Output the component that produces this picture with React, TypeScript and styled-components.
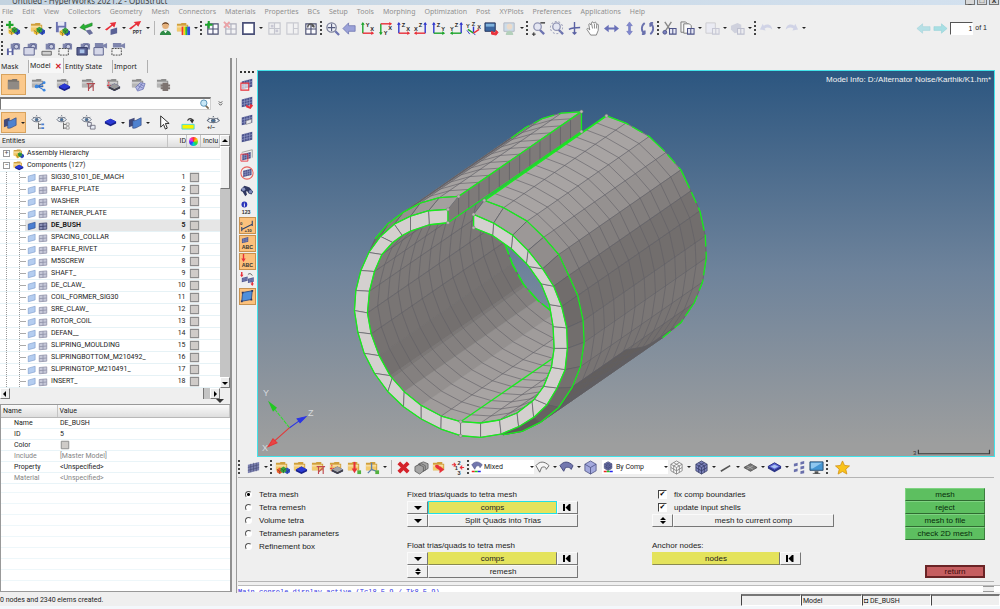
import React from "react";
import styled, { createGlobalStyle, css } from "styled-components";

const narrow = 'Roboto, "Liberation Sans", sans-serif';
const wide = '"Liberation Sans", Arial, sans-serif';

const GlobalStyle = createGlobalStyle`
  *, *::before, *::after { box-sizing: border-box; }
  body { margin: 0; background: #efefef; color: #1c1c1c; font-family: ${narrow}; font-size: 7px; line-height: 12px; }
  button, input, select { font: inherit; color: inherit; margin: 0; padding: 0; border-radius: 0; }
  button { cursor: pointer; }
  table { border-collapse: collapse; border-spacing: 0; table-layout: fixed; width: 100%; }
  th, td { padding: 0; text-align: left; font-weight: normal; }
  svg { display: block; flex: none; }
`;

/* ---------- Icon drawings, all on a 16 x 16 grid ---------- */

const Folder = ({ c = "#f3ca6c", d = "#cf9f3c" }: { c?: string; d?: string }) => (
  <g>
    <path d="M1 3h4l1-1h5v2h2v7H1z" fill={d} />
    <path d="M1 5h11v6H1z" fill={c} />
    <path d="M1 5h11v2H1z" fill="#fff" opacity=".35" />
  </g>
);
const Block = ({ x, y, c }: { x: number; y: number; c: string }) => (
  <g transform={`translate(${x} ${y})`}>
    <path d="M0 2l3-2 3 2v3L3 7 0 5z" fill={c} />
    <path d="M0 2l3 2 3-2M3 4v3" stroke="#223" strokeWidth=".4" fill="none" />
  </g>
);
const Slab = ({ x = 3, y = 7, c = "#2b3ad4" }: { x?: number; y?: number; c?: string }) => (
  <g transform={`translate(${x} ${y})`}>
    <path d="M0 3l6-3 6 3v2L6 8 0 5z" fill="#17208a" />
    <path d="M0 3l6-3 6 3-6 3z" fill={c} />
  </g>
);
const Mesh = ({ c = "#4a528c", l = "#a3aad4", s = 1, x = 0, y = 0 }: { c?: string; l?: string; s?: number; x?: number; y?: number }) => (
  <g transform={`translate(${x} ${y}) scale(${s})`}>
    <path d="M2 5L14 2v9L2 14z" fill={c} />
    <path d="M2 8l12-3M2 11l12-3M5 4v9M8 3v9M11 3v9" stroke={l} strokeWidth=".6" fill="none" />
  </g>
);
const Plate = ({ c = "#4f82cf" }: { c?: string }) => (
  <g>
    <path d="M1 5l6-2v8l-6 2z" fill="#434a78" />
    <path d="M5 6c3 1 6-2 9-3v8c-3 1-6 4-9 3z" fill={c} stroke="#31477f" strokeWidth=".7" />
  </g>
);
const Camera = () => (
  <g>
    <path d="M5 3h2l1-1h5l1 1h1v6H5z" fill="#7f85ad" />
    <circle cx="11" cy="6" r="2.4" fill="#c7cbe2" stroke="#4e5481" strokeWidth=".8" />
  </g>
);
const Eye = () => (
  <g fill="none" stroke="#5b6474" strokeWidth=".9">
    <path d="M1 5c2-3.500 8-3.500 10 0-2 3-8 3-10 0z" fill="#eef4fa" />
    <circle cx="6" cy="5" r="1.500" fill="#3c74a8" />
    <path d="M2 2l1 1M6 0v1M10 2l-1 1" />
  </g>
);
const Lens = ({ x = 7, y = 6 }: { x?: number; y?: number }) => (
  <g>
    <path d={`M${x + 2} ${y + 3}l5 5`} stroke="#6c73b0" strokeWidth="2.400" />
    <circle cx={x} cy={y} r="4" fill="#e4e6f2" stroke="#9195b4" strokeWidth="1.400" />
  </g>
);
const Grid = ({ c = "#4a4f70" }: { c?: string }) => (
  <path d="M3 3h11v11H3zM8.500 3v11M3 8.500h11" fill="#fafafe" stroke={c} strokeWidth="1.200" />
);
const Clip = ({ c = "#4e5488" }: { c?: string }) => (
  <path d="M8 8h7v6H8zM11.500 8v6" fill="#e6e7f4" stroke={c} strokeWidth="1.100" />
);
const Cube = ({ c = "#a3a9dd", l = "#454b7d", grid = false }: { c?: string; l?: string; grid?: boolean }) => (
  <g stroke={l} strokeWidth=".8" fill={c}>
    <path d="M2 4.500L8 1l6 3.500v7L8 15l-6-3.500z" />
    <path d="M2 4.500L8 8l6-3.500M8 8v7" fill="none" />
    {grid && <path d="M5 2.800l6 3.500v7M11 2.800L5 6.300v7M2 8l6 3.500L14 8" fill="none" />}
  </g>
);
const Axes = ({ h, v, hl, vl, flip = false, down = false }: { h: string; v: string; hl: string; vl: string; flip?: boolean; down?: boolean }) => {
  const x = flip ? 13 : 3;
  const y = down ? 3 : 13;
  return (
    <g>
      <path d={`M${x} ${y}V${down ? 14 : 2}`} stroke={v} strokeWidth="1.500" />
      <path d={down ? `M${x - 2} 12h4l-2 3z` : `M${x - 2} 4h4l-2-3z`} fill={v} />
      <path d={`M${x} ${y}H${flip ? 2 : 14}`} stroke={h} strokeWidth="1.500" />
      <path d={flip ? `M4 ${y - 2}v4l-3-2z` : `M12 ${y - 2}v4l3-2z`} fill={h} />
      <text x="6" y={down ? 15 : 6} fontSize="6" fontWeight="bold" fill="#222" fontFamily="Liberation Sans">{vl}</text>
      <text x={flip ? 1 : 11} y={down ? 10 : 11} fontSize="6" fontWeight="bold" fill="#222" fontFamily="Liberation Sans">{hl}</text>
    </g>
  );
};
const Star = () => (
  <path d="M8 1l2.200 4.800 5.300.500-4 3.500 1.200 5.200L8 12.300 3.300 15l1.200-5.200-4-3.500 5.300-.500z" fill="#f9c31c" stroke="#d08e10" strokeWidth=".8" />
);
const Small = ({ children, x, y, c = "#333", s = 6 }: { children: string; x: number; y: number; c?: string; s?: number }) => (
  <text x={x} y={y} fontSize={s} fontWeight="bold" fontFamily="Liberation Sans" fill={c}>{children}</text>
);
const RED = "#e8303a";
const GREEN = "#1ea52c";
const BLUE = "#3038cc";

const glyphs: Record<string, React.ReactNode> = {
  newModel: <g><path d="M2 6h6l2 3v4H2z" fill="#f4e3b0" /><Block x={3} y={8} c="#f2c033" /><Block x={9} y={8} c="#2f50c8" /><Block x={6} y={6} c="#36a53c" /><path d="M0 4h8M4 0v8" stroke={GREEN} strokeWidth="2.400" /></g>,
  open: <g><Folder /><Block x={4} y={8} c="#f2c033" /><Block x={10} y={8} c="#2f50c8" /><Block x={7} y={6} c="#36a53c" /></g>,
  save: <g><path d="M1 1h11v11H1z" fill="#6b72b0" /><path d="M3 1h7v4H3zM4 7h6v5H4z" fill="#e7e9f6" /><Block x={5} y={9} c="#f2c033" /><Block x={10} y={9} c="#2f50c8" /><Block x={8} y={7} c="#36a53c" /></g>,
  importG: <g><path d="M14 2L6 5 5 3 1 7l6 3-1-2 8-3z" fill="#27b232" stroke="#157a1e" strokeWidth=".6" /><path d="M7 10l5-1 3 4-4 2z" fill="#6a709c" /></g>,
  exportR: <g><path d="M1 9l7-5-2-2 7-1-2 6-2-2-6 5z" fill={RED} /><path d="M7 9l7-2v6l-7 2z" fill="#5a6196" /></g>,
  ppt: <g><path d="M1 8l7-5-2-2 8-1-3 6-2-2-6 5z" fill={RED} /><Small x={5} y={14} s={5}>PPT</Small></g>,
  user: <g><circle cx="8" cy="5" r="3.500" fill="#e4b07a" /><path d="M4 5c0-5 8-5 8 0-1-3-7-3-8 0z" fill="#57351b" /><path d="M2 15c0-7 12-7 12 0z" fill="#2f8b46" /><path d="M6 10l2 3 2-3z" fill="#fff" /></g>,
  contour: <g><Folder /><path d="M6 6h2v9H6z" fill="#e33" /><path d="M8 6h2v9H8z" fill="#f5d90a" /><path d="M10 6h2v9h-2z" fill="#2dbb3a" /><path d="M12 6h3v9h-3z" fill="#2a4fe0" /></g>,
  gridAdd: <g><Grid /><path d="M0 4h8M4 0v8" stroke={GREEN} strokeWidth="2.200" /></g>,
  gridDel: <g opacity=".4"><Grid /><path d="M1 1l6 6M7 1L1 7" stroke={RED} strokeWidth="2" /></g>,
  page: <path d="M2 2h12v12H2z" fill="#fff" stroke="#4a5078" strokeWidth="1.800" />,
  gridFade: <g opacity=".22"><path d="M2 2h12v12H2zM8 2v12M2 8h12" fill="#fafafe" stroke="#343a5e" strokeWidth="1.200" /><path d="M4 4h3v3H4zM9 9h3v3H9z" fill="#447" /></g>,
  gridFade2: <g opacity=".2"><path d="M2 2h12v12H2zM9 2v12M9 8h5" fill="#fafafe" stroke="#343a5e" strokeWidth="1.200" /></g>,
  gridSwap: <g><Grid /><path d="M5 7c0-5 6-5 6-1l-2-1M11 4l1 3" fill="none" stroke="#555" strokeWidth="1.500" /></g>,
  zoomFit: <g><circle cx="7" cy="7" r="5" fill="#eceef5" stroke="#7a7f98" strokeWidth="1.300" /><path d="M11 11l4 4" stroke="#6c73b0" strokeWidth="2.400" /><path d="M7 3v8M3 7h8" stroke="#555b7c" strokeWidth="1.200" /></g>,
  back: <path d="M1 8l6-6v3h7v6H7v3z" fill="#9ba2d8" stroke="#6a71ad" strokeWidth=".8" />,
  xy: <Axes h={RED} v={GREEN} hl="X" vl="Y" />,
  yx: <Axes h={RED} v={GREEN} hl="X" vl="Y" down />,
  zx: <Axes h={RED} v={BLUE} hl="X" vl="Z" />,
  xz: <Axes h={RED} v={BLUE} hl="X" vl="Z" flip />,
  zy: <Axes h={GREEN} v={BLUE} hl="Y" vl="Z" />,
  yz: <Axes h={GREEN} v={BLUE} hl="Y" vl="Z" flip />,
  iso: <g><path d="M8 12V6" stroke={BLUE} strokeWidth="1.500" /><path d="M8 13L2 9" stroke={GREEN} strokeWidth="1.500" /><path d="M8 13l6-4" stroke={RED} strokeWidth="1.500" /><path d="M4 14l-3-4M8 13l2 2" stroke={BLUE} /><Small x={6} y={5}>Z</Small><Small x={0} y={7}>Y</Small><Small x={12} y={8}>X</Small></g>,
  view: <g><path d="M1 2h11v9H1z" fill="#3b66a0" stroke="#27365c" /><path d="M2 3h9v3H2z" fill="#7fb2dc" /><path d="M8 11l4 2 1-3 2 2-2 3-5-1z" fill={RED} stroke={RED} /></g>,
  viewFade: <g opacity=".3"><path d="M2 2h11v9H2z" fill="#7fb2dc" stroke="#27365c" /><circle cx="8" cy="6" r="3" fill="#e4b07a" /><path d="M4 15c0-6 8-6 8 0z" fill="#2f8b46" /></g>,
  zoomMinus: <g><Lens /><path d="M10 2h5" stroke="#222" strokeWidth="1.300" /><path d="M1 14h4M3 12v4" stroke="#222" /></g>,
  zoomCirc: <g><Lens x={8} /><circle cx="8" cy="7" r="6.500" fill="none" stroke="#8b8fb0" strokeDasharray="2 2" /></g>,
  pan: <path d="M8 1v13M2 9c4-2 8-2 12-2M6 12l2 2 2-2" stroke="#5a61a3" strokeWidth="1.500" fill="none" />,
  hand: <path d="M5 15L1 9c0-1.500 1-1.500 3 .500L3 4c0-1.500 1.500-1.500 2 0L6 2c0-1.500 1.600-1.500 1.800 0L9 2c.300-1.200 1.800-1 1.800.300L11.500 4c.500-1 1.800-.800 1.700.500L13 10l-2 5zM6 3l1 5M9 3v5M11.500 4L11 8" fill="#fff" stroke="#666" strokeWidth=".8" />,
  horiz: <path d="M0 8l5-4v3h6V4l5 4-5 4V9H5v3z" fill="#6a71b8" />,
  vert: <path d="M8 1l3 4H9v6h2l-3 4-3-4h2V5H5z" fill="#8188d0" stroke="#6a71b8" strokeWidth=".6" />,
  rotate: <path d="M5 2C1 5 1 11 5 14M5 14v-4M5 14H2M11 14c4-3 4-9 0-12M11 2v4M11 2h3" fill="none" stroke="#6a71ad" strokeWidth="2" />,
  cut: <g><path d="M3 1l6 9M10 1L4 10" stroke="#888" strokeWidth="1.500" /><circle cx="3" cy="12" r="2" fill="#7a80c0" stroke="#4e5488" /><Clip /></g>,
  copy: <g><path d="M1 1h5l2 2v9H1z" fill="#f4f4f4" stroke="#777" /><path d="M4 3h6l2 2v8H4z" fill="#fafafa" stroke="#777" /><Clip /></g>,
  paste: <g opacity=".25"><path d="M1 2h10v11H1z" fill="#dfe1ff" stroke="#667" /><Clip /></g>,
  pasteAll: <g opacity=".3"><path d="M1 5l7-3 4 2v7L5 13 1 9z" fill="#888fb5" /><Clip /></g>,
  undo: <path d="M1 9l3-6 1 2c5-3 9 0 9 4-2-2-5-3-8-1l1 2z" fill="#c3c7e2" opacity=".7" />,
  redo: <path d="M15 9l-3-6-1 2C6 2 2 5 2 9c2-2 5-3 8-1L9 10z" fill="#c3c7e2" opacity=".7" />,
  prev: <path d="M1 8l6-5v3h8v4H7v3z" fill="#b7e0e6" stroke="#a2d3da" strokeWidth=".6" />,
  next: <path d="M15 8L9 3v3H1v4h8v3z" fill="#a8dfe4" stroke="#93d0d6" strokeWidth=".6" />,
  cam1: <g><Camera /><path d="M1 8h7v7H1z" fill="#5960a0" /><path d="M3 8h3v3H3zM3 12h3v3H3z" fill="#fff" /></g>,
  cam2: <g><Camera /><path d="M1 7h11v8H1z" fill="#d5d7e8" stroke="#5a608c" /></g>,
  cam3: <g><Camera /><path d="M1 11h10v4H1z" fill="#cfcfcf" stroke="#666" /></g>,
  cam4: <g><Camera /><path d="M1 8h10v7H1z" fill="#f2f2f2" stroke="#444" strokeDasharray="2 1" /></g>,
  cam5: <g><Camera /><path d="M1 7h11v8H1z" fill="#5a6192" stroke="#323b65" /><path d="M4 9h5v4H4z" fill="#a9c3e8" /></g>,
  cam6: <g><path d="M2 2h9v5H2zM11 4l4-2v6l-4-2z" fill="#7f85ad" /><path d="M1 7h10v8H1z" fill="#d5d7e8" stroke="#5a608c" /></g>,
  cam7: <g><path d="M2 2h9v5H2zM11 4l4-2v6l-4-2z" fill="#7f85ad" /><path d="M1 8h10v7H1z" fill="#f2f2f2" stroke="#444" strokeDasharray="2 1" /></g>,
  fPlain: <g transform="translate(1 1)"><path d="M1 2h4l1-1h5v2h2v9H1z" fill="#77716b" /><path d="M1 4h12v8H1z" fill="#8f8a85" /></g>,
  fShare: <g><Folder c="#b5b5b5" d="#8d8d8d" /><path d="M7 10l7-4M7 10l7 4M7 10h6" stroke="#2b6cc9" strokeWidth="1.200" /><circle cx="6" cy="10" r="2" fill="#3a86e0" /><circle cx="14" cy="6" r="1.500" fill="#3a86e0" /><circle cx="14" cy="14" r="1.500" fill="#3a86e0" /></g>,
  fSlab: <g><Folder c="#b5b5b5" d="#8d8d8d" /><Slab /></g>,
  fBeam: <g><Folder c="#b5b5b5" d="#8d8d8d" /><path d="M6 7h9M8 7v8M13 7v8M8 13l4-4" stroke="#b04a50" strokeWidth="1.200" fill="none" /></g>,
  fBlock: <g><Folder c="#b5b5b5" d="#8d8d8d" /><path d="M3 5v7M1 9h5" stroke={RED} strokeDasharray="2 1" /><Slab c="#9a9a9a" /><path d="M3 12l6 3 6-3v-2l-6 3-6-3z" fill="#444" /></g>,
  fMesh: <g><Folder c="#b5b5b5" d="#8d8d8d" /><path d="M5 11l5-5 5 1-2 6-6 2zM7 9l6 3M9 7l5 3M7 14l5-7" fill="#b7bce6" stroke="#6a71b3" strokeWidth=".8" /></g>,
  fGear: <g><Folder c="#b5b5b5" d="#8d8d8d" /><path d="M7 6h6v2h2v2h-2v1h2v2h-2v2H7v-2H5v-2h2v-1H5V8h2z" fill="#7d7370" /></g>,
  plate: <Plate />,
  eyeTree: <g><Eye /><path d="M8 8v7M8 10h3M8 14h3" stroke="#666" /><path d="M11 9h3v2h-3zM11 13h3v2h-3z" fill="#4b7fd0" /></g>,
  eyeTree2: <g><Eye /><path d="M8 8v7M8 10h3M8 14h3" stroke="#666" /><path d="M11 8.500h3v2.500h-3zM11 12.500h3V15h-3z" fill="#fff" stroke="#777" strokeWidth=".7" /></g>,
  eyePage: <g><Eye /><path d="M7 8h4v4H7zM10 11h5v4h-5z" fill="#e8ecf5" stroke="#778" /></g>,
  slab: <Slab x={2} y={4} />,
  cursor: <path d="M5 1v12l3-3 2 5 2-1-2-5h4z" fill="#fff" stroke="#222" />,
  yellow: <g><path d="M1 10h13v5H1z" fill="#f8f400" stroke="#46d8e0" /><path d="M7 6c1-3 4-3 6 0" stroke="#333" strokeWidth="1.300" fill="none" /><path d="M9 5h5l-2 4z" fill="#333" /></g>,
  eyePM: <g><g transform="translate(0 1) scale(1.300 1)"><Eye /></g><Small x={1} y={15}>+/−</Small></g>,
  more: <path d="M4 3l4 4 4-4M4 8l4 4 4-4" fill="none" stroke="#333" strokeWidth="1.800" />,
  vMaskBox: <g><Mesh /><path d="M1 7h9v8H1z" fill="#f4eef0" fillOpacity=".7" stroke={RED} strokeWidth="1.200" /></g>,
  vMaskRed: <g><Mesh /><path d="M7 11l4 2 1-3 3 2-3 4-5-2z" fill={RED} /></g>,
  vMaskHalf: <g><Mesh /><path d="M7 9l6-2v4l-6 2z" fill="#e9e9ee" stroke="#888" strokeWidth=".7" /></g>,
  vMesh: <Mesh />,
  vMeshBox: <g><path d="M2 5l12-3v9" fill="none" stroke="#888" strokeWidth=".8" /><Mesh s={0.8} x={1} y={3} /><path d="M1 7h8v8H1z" fill="none" stroke={RED} /></g>,
  vMeshCirc: <g><Mesh s={0.8} x={2} y={1.5} /><circle cx="8" cy="8" r="7" fill="none" stroke="#e8625c" strokeWidth="1.200" /></g>,
  vBinoc: <g><path d="M1 7l4-4 3 1 3 1 4 5-2 3-3-1-2-3-1 1 1 3-2 2-3-5-2-1z" fill="#2f3760" /><circle cx="4" cy="7" r="2" fill="#8b94c0" /><circle cx="12" cy="10" r="2" fill="#7c86b6" /></g>,
  vInfo: <g><circle cx="5" cy="4" r="3.300" fill="#2732b8" /><path d="M5 3.500v3M5 2v1" stroke="#fff" strokeWidth="1.100" /><Small x={2} y={15}>123</Small></g>,
  vRuler: <g><path d="M2 12L14 6M2 9v5M14 2v6" stroke="#28406e" strokeWidth="1.200" /><Small x={0} y={7} s={5}>0</Small><Small x={5} y={15} s={5}>+10</Small></g>,
  vAbc: <g><Mesh s={0.6} x={1} y={0} /><Small x={2} y={15}>ABC</Small></g>,
  vAbcRed: <g><path d="M4 0v6" stroke={RED} strokeWidth="1.600" /><path d="M1.500 5h5L4 9z" fill={RED} /><Small x={2} y={15}>ABC</Small></g>,
  vSplit: <g><path d="M2 0v4M14 9v5" stroke={RED} strokeWidth="1.600" /><path d="M0 3h4L2 6zM12 13h4l-2 3z" fill={RED} /><Mesh s={0.55} x={1} y={4} /><Mesh s={0.55} x={8} y={5} /><path d="M9 3c2-2 4-1 5 1" stroke="#444" fill="none" /></g>,
  vPlate: <g><path d="M3 4l11-2-1 10L2 14z" fill="#4f8fdb" stroke="#2b4b86" /><path d="M2 3h2v2H2zM13 1h2v2h-2zM12 11h2v2h-2zM1 13h2v2H1z" fill="#2b3560" /></g>,
  bMesh: <Mesh c="#7a7fae" l="#444a70" />,
  bFolderBlocks: <g><Folder /><Block x={2} y={8} c="#f2602d" /><Block x={10} y={8} c="#2f50c8" /><Block x={6} y={7} c="#36a53c" /></g>,
  bFolderSlab: <g><Folder /><Slab /></g>,
  bFolderBeam: <g><Folder /><path d="M6 7h9M8 7v8M13 7v8M8 13l4-4" stroke="#c04a50" strokeWidth="1.200" fill="none" /></g>,
  bFolderBlock: <g><Folder /><path d="M3 5v7M1 9h5" stroke={RED} strokeDasharray="2 1" /><Slab c="#a5a5a5" /><path d="M3 12l6 3 6-3v-2l-6 3-6-3z" fill="#444" /></g>,
  bFolderRed: <g><Folder /><path d="M8 2v8" stroke={RED} strokeWidth="2.200" /><path d="M5 9h6l-3 5z" fill={RED} /><path d="M11 11h4v4h-4z" fill="#53b13f" /></g>,
  bFolderAxis: <g><Folder /><path d="M7 3v7M7 10l-4 4M7 10l5 2" stroke="#5a7fb0" strokeWidth="1.400" /><path d="M11 11h4v4h-4z" fill="#53b13f" /></g>,
  bX: <path d="M3 3l10 10M13 3L3 13" stroke="#d4232b" strokeWidth="4" />,
  bBlocks: <g fill="#a5a5a5" stroke="#555" strokeWidth=".8"><path d="M5 4l5-2 5 2v5l-5 3-5-3z" /><path d="M3 6l5-2 4 2v5l-5 2-4-2z" /><path d="M1 7l4-2 5 2v5l-4 3-5-3z" /></g>,
  bMove: <g><Folder /><path d="M3 6c3-2 5 0 5 2V6l5 4-5 4v-3C6 9 4 9 3 6z" fill={RED} /></g>,
  bNum: <g><path d="M2 5h4M4 3l2 2-2 2M15 8h-4M13 6l-2 2 2 2" fill="none" stroke={RED} strokeWidth="1.200" /><Small x={8} y={5} s={6}>2</Small><Small x={5} y={11} s={6}>1</Small><Small x={8} y={16} s={6}>3</Small></g>,
  bShellO: <path d="M1 6c4-5 9-5 14 0l-3 4c0-3-3-3-5-2l-2 5z" fill="#f5f5f5" stroke="#666" />,
  bShell: <path d="M1 6c4-5 9-5 14 0l-2 4c-2-3-4-2-6-2l-2 4z" fill="#7277ae" stroke="#454b7d" />,
  bCube: <Cube />,
  bWire: <Cube c="#f6f6f6" l="#777" grid />,
  bCubeGrid: <Cube c="#7a80ba" l="#333963" grid />,
  bLine: <path d="M3 12L13 6" stroke="#555" strokeWidth="1.800" />,
  bTile: <g><path d="M1 8l7-4 7 4-7 4z" fill="#777" stroke="#555" /><path d="M4 6l7 4M11 6L4 10" stroke="#bbb" strokeWidth=".7" /></g>,
  bSlab: <g><path d="M1 7l7-4 7 4v2l-7 4-7-4z" fill="#2c3588" /><path d="M1 7l7-4 7 4-7 4z" fill="#5d66d6" stroke="#2c3588" /><path d="M4 7l4-2 4 2-4 2z" fill="#a9c3f0" /></g>,
  bSquares: <g fill="#6a70ac"><path d="M2 4l4-1v3L2 7zM2 10l4-1v3l-4 1zM9 2l4-1v3L9 5zM9 7l4-1v3l-4 1zM9 12l4-1v3l-4 1z" /></g>,
  bMonitor: <g><path d="M1 2h14v9H1z" fill="#4596d3" stroke="#2c4d70" /><path d="M2 3h12L4 9H2z" fill="#8fc7ef" /><path d="M6 12h4v2h2v1H4v-1h2z" fill="#555" /></g>,
  star: <Star />,
  search: <g><path d="M9 9l5 5" stroke="#7a6a55" strokeWidth="2.400" /><circle cx="7" cy="6" r="4.600" fill="#c9e8f7" stroke="#5c95b8" strokeWidth="1.400" /></g>,
  tPlate: <path d="M2 5l11-3v9L2 14z" fill="#b4cdf0" stroke="#7d9bcb" />,
  tPlateSel: <path d="M2 5l11-3v9L2 14z" fill="#4b7ed0" stroke="#274c92" />,
  tMesh: <path d="M2 4l12-1v10L2 14zM8 3.500v10M2 9l12-1" fill="#c6c8d8" stroke="#8b8da6" strokeWidth="1.200" />,
  tMeshSel: <path d="M2 4l12-1v10L2 14zM8 3.500v10M2 9l12-1" fill="#8d92b8" stroke="#353b66" strokeWidth="1.200" />,
  tSwatch: <path d="M2 2h12v12H2z" fill="#cfcbc8" stroke="#8c8c8c" strokeWidth="1.500" />,
  modes: <g><path d="M1 5c4-5 9-5 14 0l-3 4c0-3-3-3-5-2l-2 4z" fill="#7277ae" stroke="#454b7d" strokeWidth=".7" /><path d="M1 13h4v2H1z" fill="#e22" /><path d="M5 13h4v2H5z" fill="#2c2" /><path d="M9 13h4v2H9z" fill="#22e" /></g>,
  modes2: <g><g transform="scale(.85)"><Cube c="#6f75b0" l="#333963" grid /></g><path d="M1 13h4v2H1z" fill="#e22" /><path d="M5 13h4v2H5z" fill="#2c2" /><path d="M9 13h4v2H9z" fill="#22e" /></g>,
};

const Icon = ({ name, size = 15 }: { name: string; size?: number }) => (
  <svg width={size} height={size} viewBox="0 0 16 16" aria-hidden="true">{glyphs[name]}</svg>
);

/* ---------- Frame ---------- */

const Page = styled.div`
  min-height: 100vh;
  display: flex;
  flex-direction: column;
`;
const TitleBar = styled.header`
  height: 5px;
  overflow: hidden;
  display: flex;
  align-items: flex-end;
  justify-content: space-between;
  padding: 0 1px 0 12px;
  background: linear-gradient(to right, #c3d3e0, #d3e1ef);
  font: 8px/8px "Noto Sans", sans-serif;
  color: #444;
`;
const WindowButtons = styled.div`
  display: flex;
  gap: 2px;
`;
const WindowButton = styled.button`
  width: 10px;
  height: 10px;
  border: 1px solid #777;
  background: #d8d8d8;
  font-size: 8px;
  line-height: 8px;
  font-weight: bold;
`;
const MenuBar = styled.nav`
  display: flex;
  gap: 9px;
  height: 13px;
  padding-left: 2px;
  font: 7px/13px "Noto Sans", sans-serif;
`;
const MenuLink = styled.a`
  color: #8f8f8f;
  text-decoration: none;
`;
const Toolbar = styled.div`
  display: flex;
  align-items: center;
  height: 20px;
`;
const Group = styled.div<{ $w: number }>`
  display: flex;
  align-items: center;
  justify-content: space-between;
  width: ${(p) => p.$w}px;
`;
const Handle = styled.i`
  width: 2px;
  height: 15px;
  margin: 0 1px;
  background: repeating-linear-gradient(to bottom, #444 0 2px, transparent 2px 4px);
`;
const Rule = styled.i`
  width: 1px;
  height: 14px;
  margin: 0 2px;
  background: #b5b5b5;
`;
const Caret = styled.i`
  display: block;
  border: 2px solid transparent;
  border-top-color: #222;
  border-bottom: 0;
`;
const ToolButton = styled.button<{ $w?: number; $on?: boolean }>`
  display: flex;
  align-items: center;
  justify-content: ${(p) => (p.$w ? "center" : "flex-start")};
  gap: 3px;
  width: ${(p) => (p.$w ? `${p.$w}px` : "auto")};
  padding: 0 1px;
  border: 0;
  background: none;
  ${(p) => p.$on && css`
    align-self: stretch;
    background: #fbc98c;
    outline: 1px solid #d8a35e;
    outline-offset: -1px;
  `}
`;
const Pager = styled.label`
  display: flex;
  align-items: center;
  gap: 2px;
  margin-left: auto;
  padding-right: 13px;
  font-family: ${wide};
`;
const PageInput = styled.input`
  width: 23px;
  height: 13px;
  border: 1px solid #fff;
  border-top-color: #555;
  border-left-color: #555;
  background: #fff;
  text-align: right;
`;

/* A trailing "+" marks a drop-down button; "|" is a rule and ":" a grip. */
const Tools = ({ items, w }: { items: string[]; w: number }) => (
  <Group $w={w}>
    {items.map((n, i) =>
      n === ":" ? <Handle key={i} /> : n === "|" ? <Rule key={i} /> : (
        <ToolButton key={i} aria-label={n.replace("+", "")}>
          <Icon name={n.replace("+", "")} />
          {n.endsWith("+") && <Caret />}
        </ToolButton>
      )
    )}
  </Group>
);

const Main = styled.main`
  flex: 1;
  display: flex;
`;

/* ---------- Browser panel ---------- */

const Side = styled.aside`
  width: 232px;
  flex: none;
  display: flex;
  flex-direction: column;
  border-right: 2px solid #909090;
  margin-bottom: 1px;
`;
const Tabs = styled.div`
  display: flex;
  height: 15px;
  align-items: flex-end;
  font: 7px/12px "Noto Sans", sans-serif;
`;
const Tab = styled.button<{ $w: number; $on?: boolean }>`
  width: ${(p) => p.$w}px;
  height: ${(p) => (p.$on ? 15 : 13)}px;
  display: flex;
  align-items: center;
  gap: 4px;
  border: 0;
  border-right: 1px solid #b0b0b0;
  background: ${(p) => (p.$on ? "#f7f7f7" : "#efefef")};
  white-space: nowrap;
  padding-left: 1px;
`;
const CloseMark = styled.span`
  color: #d0222a;
  font-weight: bold;
  font-size: 8px;
`;
const SideTools = styled.div`
  display: flex;
  align-items: center;
  height: 23px;
  padding: 1px;
`;
const SearchRow = styled.div`
  display: flex;
  align-items: center;
  height: 15px;
  gap: 6px;
`;
const SearchBox = styled.label`
  display: flex;
  align-items: center;
  width: 211px;
  height: 13px;
  background: #fff;
  border: 1px solid #d0d0d0;
  border-top: 2px solid #777;
  border-left-color: #777;
`;
const SearchInput = styled.input`
  flex: 1;
  min-width: 0;
  height: 9px;
  border: 0;
  outline: 0;
  background: none;
`;
const TreeArea = styled.div`
  display: flex;
  border-top: 1px solid #aaa;
`;
const TreeClip = styled.div`
  flex: 1;
  min-width: 0;
  background: #fff;
`;
const HeadCell = styled.th<{ $right?: boolean }>`
  height: 12px;
  padding-left: 2px;
  border-right: 1px solid #c4c4c4;
  border-bottom: 1px solid #b8b8b8;
  background: linear-gradient(#fafafa, #dedede);
  overflow: hidden;
  white-space: nowrap;
  text-align: ${(p) => (p.$right ? "right" : "left")};
`;
const TreeRow = styled.tr<{ $on?: boolean }>`
  td {
    height: 12px;
    line-height: 11px;
    border-bottom: 1px solid #e6f2f6;
    white-space: nowrap;
    font-weight: ${(p) => (p.$on ? "bold" : "normal")};
    background: ${(p) => (p.$on ? "#e6e6e6" : "#fff")};
  }
  td:first-child {
    background: ${(p) => (p.$on ? "linear-gradient(to right, #fff 25px, #e6e6e6 25px)" : "#fff")};
  }
`;
const NameCell = styled.span`
  display: flex;
  align-items: center;
  height: 11px;
  gap: 1px;
`;
const Guide = styled.i`
  align-self: stretch;
  width: 13px;
  margin-left: 6px;
  margin-right: -7px;
  border-left: 1px dotted #999;
`;
const Branch = styled.i`
  align-self: stretch;
  width: 7px;
  margin-left: 6px;
  border-left: 1px dotted #999;
  background: linear-gradient(#aaa, #aaa) 0 5px / 6px 1px no-repeat;
`;
const Toggle = styled.button`
  width: 7px;
  height: 7px;
  margin: 0 2px 0 3px;
  border: 1px solid #999;
  background: #fff;
  font-size: 7px;
  line-height: 5px;
  color: #555;
`;
const RowLabel = styled.span`
  margin-left: 2px;
`;
const IdCell = styled.td`
  && { text-align: right; padding-right: 1px; }
`;
const SwatchCell = styled.td`
  && { padding-left: 2px; }
`;
const Wheel = styled.i`
  display: block;
  width: 9px;
  height: 9px;
  border-radius: 50%;
  background: conic-gradient(#f33, #fc0, #3d3, #0cc, #33f, #e3e, #f33);
`;
const ScrollV = styled.div`
  width: 10px;
  display: flex;
  flex-direction: column;
  background: #c4c4c4;
`;
const ScrollH = styled.div`
  height: 11px;
  margin-right: 10px;
  display: flex;
  background: #c4c4c4;
`;
const ScrollButton = styled.button`
  width: 10px;
  height: 11px;
  flex: none;
  border: 1px solid #fff;
  border-right-color: #777;
  border-bottom-color: #777;
  background: #ececec;
  display: grid;
  place-items: center;
`;
const ThumbV = styled.i`
  height: 43px;
  margin-bottom: auto;
  background: #f0f0f0;
  border: 1px solid #fff;
  border-right-color: #777;
  border-bottom-color: #777;
`;
const ThumbH = styled.i`
  width: 194px;
  margin-right: auto;
  background: #efefef;
  border-right: 1px solid #777;
`;
const Splitter = styled.div`
  height: 5px;
  display: flex;
  justify-content: flex-end;
  padding-right: 6px;
`;
const SplitArrow = styled.i`
  border: 4px solid transparent;
  border-top: 4px solid #333;
  border-bottom: 0;
  height: 0;
`;
const Properties = styled.div`
  flex: 1;
  border: 1px solid #999;
  border-right: 0;
  background: repeating-linear-gradient(#fff 0 10px, #eef7fa 10px 11px);
`;
const PropRow = styled.tr<{ $dim?: boolean }>`
  color: ${(p) => (p.$dim ? "#858585" : "#1c1c1c")};
  th, td {
    height: 11px;
    line-height: 10px;
    border-bottom: 1px solid #e9f4f8;
    background: #fff;
  }
  th { padding-left: 13px; }
  td { padding-left: 3px; }
`;

/* ---------- Work area ---------- */

const Work = styled.section`
  flex: 1;
  min-width: 0;
  display: flex;
  flex-direction: column;
  margin-left: 4px;
  border-left: 1px solid #9a9a9a;
`;
const Stage = styled.div`
  flex: 1;
  display: flex;
  padding-right: 5px;
  padding-top: 12px;
  min-height: 0;
`;
const Rail = styled.div`
  width: 20px;
  height: 235px;
  display: flex;
  flex-direction: column;
  align-items: center;
  justify-content: space-between;
`;
const RailGrip = styled.i`
  width: 14px;
  height: 2px;
  margin: 1px 0 2px;
  background: repeating-linear-gradient(to right, #333 0 2px, transparent 2px 4px);
`;
const RailButton = styled.button<{ $on?: boolean }>`
  width: 17px;
  height: 17px;
  display: grid;
  place-items: center;
  border: 1px solid ${(p) => (p.$on ? "#c79250" : "transparent")};
  background: ${(p) => (p.$on ? "#fcc17c" : "none")};
`;
const Viewport = styled.div`
  position: relative;
  flex: 1;
  border: 1px solid #42e3ea;
  background: linear-gradient(#2c5680, #6e839b 52%, #9d9e9e 97%);
`;
const Scene = styled.svg`
  width: 100%;
  height: 100%;
  position: absolute;
  inset: 0;
`;
const ModelInfo = styled.p`
  position: absolute;
  top: 3px;
  right: 3px;
  margin: 0;
  color: #f4f4f4;
  font: 8px/12px ${wide};
`;
const PickBox = styled.label<{ $w: number }>`
  display: flex;
  align-items: center;
  gap: 1px;
  width: ${(p) => p.$w}px;
  height: 14px;
  background: #fff;
  padding-left: 1px;
`;
const Pick = styled.select`
  flex: 1;
  min-width: 0;
  border: 0;
  outline: 0;
  background: none;
  appearance: none;
`;
const Line = styled.hr`
  height: 1px;
  margin: 0 6px 0 1px;
  border: 0;
  background: #b4b4b4;
`;
const Panel = styled.form`
  display: grid;
  grid-template-columns: 170px 245px 1fr 80px;
  padding: 10px 15px 3px 0;
  font: 8px/13px ${wide};
`;
const Column = styled.div`
  display: flex;
  flex-direction: column;
  align-items: flex-start;
`;
const Choice = styled.label`
  display: flex;
  align-items: center;
  height: 13px;
  gap: 7px;
`;
const Radio = styled.input`
  appearance: none;
  width: 7px;
  height: 7px;
  && { margin: 0 0 0 8px; }
  border: 1px solid #fff;
  border-top-color: #555;
  border-left-color: #555;
  border-radius: 50%;
  background: #fff;
  &:checked { background: radial-gradient(circle, #000 0 1px, #fff 2px); }
`;
const Check = styled.input`
  appearance: none;
  width: 9px;
  height: 9px;
  && { margin: 0 0 0 6px; }
  border: 1px solid #fff;
  border-top-color: #444;
  border-left-color: #444;
  background: #fff;
  display: grid;
  place-items: center;
  &:checked::before { content: "✔"; font: 7px/7px "DejaVu Sans"; color: #000; }
`;
const Bar = styled.div`
  display: flex;
  height: 13px;
`;
const raised = css`
  border: 1px solid #fafafa;
  border-right-color: #777;
  border-bottom-color: #777;
`;
const PanelButton = styled.button<{ $w: number; $tone?: "pick" | "active" | "go" | "quit" }>`
  width: ${(p) => p.$w}px;
  height: 13px;
  display: flex;
  align-items: center;
  justify-content: center;
  line-height: 10px;
  background: #efefef;
  ${raised}
  ${(p) => p.$tone === "pick" && css`background: #e4e35c; border-color: #e4e35c #777 #8a8a50 #e4e35c;`}
  ${(p) => p.$tone === "active" && css`background: #e4e35c; border-color: #22dfe6;`}
  ${(p) => p.$tone === "go" && css`background: #5dbf60; border-color: #7fd382 #3c7d3e #2f6a31 #7fd382; color: #082c0b;`}
  ${(p) => p.$tone === "quit" && css`background: #c55e60; border: 2px solid #6a2426; color: #3c0a0c;`}
`;
const Quit = styled.div`
  margin-top: auto;
  align-self: flex-end;
`;
const Spacer = styled.div`
  height: 12px;
`;
const Console = styled.div`
  height: 7px;
  margin: 3px 0 1px 1px;
  overflow: hidden;
  display: flex;
  justify-content: space-between;
  border-top: 1px solid #bbb;
  background: #fff;
  color: #3434e0;
  font: 7px/12px "Liberation Mono", monospace;
`;
const Grip = styled.i`
  width: 11px;
  height: 6px;
  margin: 0 6px 0 0;
  border: 1px solid #999;
  border-width: 1px 0;
  background: #efefef;
`;

/* ---------- Status bar ---------- */

const StatusBar = styled.footer`
  display: flex;
  height: 16px;
  border-bottom: 3px solid #f3f7fb;
  align-items: center;
`;
const StatusText = styled.span`
  flex: 1;
`;
const StatusCell = styled.span<{ $w: number }>`
  width: ${(p) => p.$w}px;
  height: 12px;
  padding-left: 1px;
  border: 1px solid #fff;
  border-top: 2px solid #777;
  border-left-color: #444;
  line-height: 10px;
`;

/* ---------- The meshed bush ---------- */

type Pt = [number, number];
const AXIS: Pt = [122, -84.5];
const BORE: Pt = [133, -91.5];
const faceOuter: Pt[] = [
  [447.7, 209], [428.3, 210.3], [410.3, 215.7], [394, 223.7], [380.3, 236], [368.7, 252], [360.7, 270], [355.7, 290],
  [354.3, 310], [357.7, 331.7], [364, 352.7], [374.3, 372.7], [387.7, 391], [403.3, 406], [421, 418.3], [440.7, 428.3],
  [460.3, 435], [480.3, 436.7], [500.7, 433.3], [518.3, 426], [533.3, 416.7], [546.7, 404], [556.7, 387.3], [564.7, 369],
  [567, 347.7], [566.3, 327.3], [561.3, 306], [553.3, 285.7], [542.3, 268.3], [527.7, 250], [512.3, 234.7], [493.3, 222.7], [473.3, 214],
];
const faceInner: Pt[] = [
  [447.7, 222.3], [429, 224.3], [410.3, 230.7], [402, 235], [392.5, 242], [381.7, 254], [374.3, 271], [369.3, 290.7],
  [367.3, 312.3], [371, 333.3], [379, 355], [390, 375], [392, 377.5], [404, 391], [421, 404.7], [441, 415.3],
  [460.3, 421], [480.3, 422.3], [499.3, 419.3], [516.7, 412.3], [531.7, 400.7], [534, 398.5], [543.3, 385.7], [551, 366.7],
  [553.7, 347.7], [552.7, 326], [549, 304], [540.7, 283.3], [528.5, 266], [526, 263], [511, 248.3], [492.3, 235], [473.3, 227.3],
];
const rimLeft: Pt[] = [[458.3, 196], [439, 197.3], [420, 202.7], [403.3, 211.7], [388, 223], [375, 238.3]];
const rimRight: Pt[] = [
  [484, 200], [503.3, 207.3], [526.7, 220.7], [543.3, 236.7], [558.3, 254], [568.3, 275], [577.3, 295], [582.7, 320],
  [583.7, 341.7], [580, 366], [571.7, 386.7], [558.3, 406.7], [540, 421.7], [521.7, 430.7], [503, 434],
];
const rightShade = [170, 168, 160, 149, 130, 117, 114, 118, 122, 120, 114, 106, 98];
const leftShade = [172, 166, 156, 138, 120];
const boreShade: Record<number, number> = {
  4: 126, 5: 127, 6: 126, 7: 124, 8: 121, 9: 118, 10: 116, 11: 124, 12: 132, 13: 148, 14: 160, 15: 168, 16: 173, 17: 171, 18: 165, 19: 156, 20: 146, 21: 138, 22: 126,
};
const at = (p: Pt, v: Pt, t: number): Pt => [p[0] + v[0] * t, p[1] + v[1] * t];
const str = (pts: Pt[]) => pts.map((p) => p.map((n) => n.toFixed(1)).join(",")).join(" ");
const grey = (v: number) => `rgb(${v},${v - 4},${v - 5})`;
const steps = (n: number) => Array.from({ length: n + 1 }, (_, i) => i / n);
const EDGE = "#5f5e64";
const LIME = "#17ee1c";

/* The seams named in `plain` carry no drawn edge. */
const Surface = ({ ring, v, n, shade, plain = [] }: { ring: Pt[]; v: Pt; n: number; shade: (i: number) => number; plain?: number[] }) => (
  <g>
    {ring.slice(1).map((p, i) => (
      <polygon key={i} points={str([ring[i], p, at(p, v, 1), at(ring[i], v, 1)])} fill={grey(shade(i))} stroke={grey(shade(i))} strokeWidth=".5" />
    ))}
    {ring.map((p, i) => !plain.includes(i) && <polyline key={i} points={str([p, at(p, v, 1)])} fill="none" stroke={EDGE} strokeWidth=".6" />)}
    {steps(n).map((t) => <polyline key={t} points={str(ring.map((p) => at(p, v, t)))} fill="none" stroke={EDGE} strokeWidth=".6" />)}
  </g>
);
const Band = ({ a, b, shade }: { a: Pt[]; b: Pt[]; shade: (i: number) => number }) => (
  <g>
    {a.slice(1).map((p, i) => (
      <polygon key={i} points={str([a[i], p, b[i + 1], b[i]])} fill={grey(shade(i))} stroke={EDGE} strokeWidth=".7" />
    ))}
  </g>
);
const Green = ({ pts, w = 1.3, dash }: { pts: Pt[]; w?: number; dash?: string }) => (
  <polyline points={str(pts)} fill="none" stroke={LIME} strokeWidth={w} strokeDasharray={dash} />
);

const Model = () => {
  const chamferRight = faceOuter.slice(18).reverse();
  const bore = faceInner.slice(4, 24);
  const backLeft = rimLeft.map((p) => at(p, AXIS, 1));
  const backRight = rimRight.map((p) => at(p, AXIS, 1));
  const opening: Pt[] = [...faceInner, [473.3, 214], [484, 199]];
  const slotTop: Pt = [581, 111.3];
  const slotFoot: Pt = [581, 131.3];
  return (
    <g strokeLinejoin="round">
      <defs>
        <clipPath id="opening"><polygon points={str(opening)} /></clipPath>
      </defs>
      <Surface ring={rimLeft.slice(0, 5)} v={AXIS} n={12} shade={(i) => leftShade[i]} />
      <Green pts={backLeft.slice(0, 5)} dash="22 5" />
      <Band a={faceOuter.slice(0, 6)} b={rimLeft} shade={(i) => leftShade[i] - 8} />
      <g clipPath="url(#opening)">
        <Surface ring={bore} v={BORE} n={13} shade={(i) => boreShade[i + 4] ?? 120} plain={[6, 7, 8, 9, 10, 12]} />
        <Green pts={bore.map((p) => at(p, BORE, 1))} dash="16 3" w={1.6} />
        <Green pts={[faceInner[16], at(faceInner[16], BORE, 1)]} />
      </g>
      <polygon points={str([faceOuter[0], rimLeft[0], slotTop, slotFoot, faceInner[0]])} fill={grey(126)} />
      {steps(12).slice(0, 12).map((t) => {
        const top = at(rimLeft[0], AXIS, t);
        return <polyline key={t} points={str([top, [top[0], 222.3 - (top[0] - 447.7) * 0.683]])} stroke={EDGE} strokeWidth=".7" />;
      })}
      <Surface ring={rimRight} v={AXIS} n={12} shade={(i) => rightShade[i] ?? 98} />
      <Band a={chamferRight} b={rimRight} shade={(i) => (rightShade[i] ?? 98) - 4} />
      <Band a={faceOuter} b={faceInner} shade={() => 212} />
      <Green pts={faceOuter} />
      <Green pts={faceInner} />
      <Green pts={rimLeft} />
      <Green pts={rimRight} />
      <Green pts={backRight.slice(0, 13)} dash="24 4 12 5" />
      <Green pts={[faceInner[0], faceOuter[0]]} />
      <Green pts={[rimLeft[0], slotTop, slotFoot]} />
      <Green pts={[faceInner[0], slotFoot]} w={1.2} />
      <Green pts={[faceInner[32], faceOuter[32]]} />
      <Green pts={[rimRight[0], backRight[0]]} w={1.8} />
      {[faceInner[0], faceOuter[0], rimLeft[0], slotTop, slotFoot, backRight[0], rimRight[0], faceOuter[32], faceInner[32], faceInner[16], faceOuter[16]].map((p, i) => (
        <circle key={i} cx={p[0]} cy={p[1]} r="1.600" fill="#b9b5b3" stroke="#777" strokeWidth=".5" />
      ))}
    </g>
  );
};

const Triad = () => (
  <g fontFamily="Liberation Sans" fontSize="9" fill="#d5d9dd">
    <path d="M289.500 427l-16-20" stroke="#2ce02c" strokeDasharray="4 1" />
    <path d="M268 400l9 7-4 4z" fill="#20c820" />
    <path d="M289.500 427l10-7" stroke="#2a34e6" />
    <path d="M306 416l-9 2 3 4z" fill="#2a34e6" stroke="#2a34e6" />
    <path d="M289.500 427l-18 16" stroke="#e63434" />
    <path d="M268 446l5-8 4 4z" fill="#e84545" stroke="#e63434" />
    <text x="263" y="395">Y</text>
    <text x="308" y="415">Z</text>
    <text x="262" y="450">X</text>
    <path d="M917.500 449v4h71v-4" stroke="#3a3a3a" strokeWidth="1.200" fill="none" />
    <text x="912" y="454" fontSize="6" fill="#333">3</text>
  </g>
);

/* ---------- Content ---------- */

const menus = ["File", "Edit", "View", "Collectors", "Geometry", "Mesh", "Connectors", "Materials", "Properties", "BCs", "Setup", "Tools", "Morphing", "Optimization", "Post", "XYPlots", "Preferences", "Applications", "Help"];
const components = ["SIG30_S101_DE_MACH", "BAFFLE_PLATE", "WASHER", "RETAINER_PLATE", "DE_BUSH", "SPACING_COLLAR", "BAFFLE_RIVET", "M5SCREW", "SHAFT_", "DE_CLAW_", "COIL_FORMER_SIG30", "SRE_CLAW_", "ROTOR_COIL", "DEFAN__", "SLIPRING_MOULDING", "SLIPRINGBOTTOM_M210492_", "SLIPRINGTOP_M210491_", "INSERT_"];
const rail = ["vMaskBox", "vMaskRed", "vMaskHalf", "vMesh", "vMeshBox", "vMeshCirc", "vBinoc", "vInfo", "vRuler", "vAbc", "vAbcRed", "vSplit", "vPlate"];
const railOn = ["vRuler", "vAbc", "vAbcRed", "vPlate"];

const arrows = { up: "M0 4h6L3 1z", down: "M0 2h6L3 5z", left: "M4 0v6L1 3z", right: "M2 0v6l3-3z" };
const Scroll = ({ to }: { to: keyof typeof arrows }) => (
  <ScrollButton aria-label={`Scroll ${to}`}><svg width="6" height="6" viewBox="0 0 6 6"><path d={arrows[to]} /></svg></ScrollButton>
);
const First = () => <PanelButton type="button" $w={21} aria-label="reset"><svg width="9" height="7" viewBox="0 0 9 7"><path d="M0 0h2v7H0zM6 0v7L2.500 3.500z" /><path d="M6 0h1.500v7H6z" /></svg></PanelButton>;
const Down = () => <PanelButton type="button" $w={21} aria-label="switch"><svg width="8" height="4" viewBox="0 0 8 4"><path d="M0 0h8L4 4z" /></svg></PanelButton>;
const Spin = () => <PanelButton type="button" $w={21} aria-label="toggle"><svg width="6" height="7" viewBox="0 0 6 7"><path d="M0 3l3-3 3 3zM0 4l3 3 3-3z" /></svg></PanelButton>;

export default function App() {
  return (
    <Page>
      <GlobalStyle />
      <TitleBar>
        <span>Untitled - HyperWorks 2021.2 - OptiStruct</span>
        <WindowButtons>
          <WindowButton aria-label="Minimize">_</WindowButton>
          <WindowButton aria-label="Maximize">□</WindowButton>
          <WindowButton aria-label="Close">x</WindowButton>
        </WindowButtons>
      </TitleBar>
      <MenuBar>{menus.map((m) => <MenuLink key={m} href="#">{m}</MenuLink>)}</MenuBar>
      <Toolbar>
        <Tools w={199} items={[":", "newModel+", "open+", "save+", "importG+", "exportR+", "ppt+", "|", "user", "contour+"]} />
        <Tools w={120} items={[":", "gridAdd", "gridDel", "page+", "gridFade", "gridFade2", "gridSwap"]} />
        <Tools w={206} items={[":", "zoomFit", "back", "xy", "yx", "zx", "xz", "zy", "yz", "iso", "view", "viewFade+"]} />
        <Tools w={131} items={[":", "zoomMinus", "zoomCirc", "pan", "hand", "horiz", "vert", "rotate"]} />
        <Tools w={97} items={[":", "cut", "copy+", "paste+", "pasteAll+"]} />
        <Tools w={54} items={[":", "undo+", "redo+"]} />
        <Pager>
          <Icon name="prev" />
          <Icon name="next" />
          <PageInput defaultValue="1" />
          <span>of 1</span>
        </Pager>
      </Toolbar>
      <Toolbar>
        <Tools w={127} items={[":", "cam1", "cam2", "cam3", "cam4", "cam5", "cam6", "cam7"]} />
      </Toolbar>
      <Main>
        <Side>
          <Tabs>
            <Tab $w={29}>Mask</Tab>
            <Tab $w={35} $on>Model <CloseMark>✕</CloseMark></Tab>
            <Tab $w={49}>Entity State</Tab>
            <Tab $w={35}>Import</Tab>
          </Tabs>
          <SideTools>
            {["fPlain", "fShare", "fSlab", "fBeam", "fBlock", "fMesh", "fGear"].map((n) => (
              <ToolButton key={n} $w={25} $on={n === "fPlain"} aria-label={n}><Icon name={n} /></ToolButton>
            ))}
          </SideTools>
          <SearchRow>
            <SearchBox>
              <SearchInput aria-label="Search" />
              <Icon name="search" size={11} />
            </SearchBox>
            <Icon name="more" size={7} />
          </SearchRow>
          <SideTools>
            <ToolButton $w={25} $on aria-label="display"><Icon name="plate" /><Caret /></ToolButton>
            {["eyeTree", "eyeTree2", "eyePage"].map((n) => <ToolButton key={n} $w={25} aria-label={n}><Icon name={n} /></ToolButton>)}
            <ToolButton $w={25} aria-label="component"><Icon name="slab" /><Caret /></ToolButton>
            <ToolButton $w={25} aria-label="geometry"><Icon name="plate" /><Caret /></ToolButton>
            {["cursor", "yellow", "eyePM"].map((n) => <ToolButton key={n} $w={25} aria-label={n}><Icon name={n} /></ToolButton>)}
          </SideTools>
          <TreeArea>
            <TreeClip>
              <table>
                <colgroup><col /><col width="19" /><col width="14" /><col width="19" /></colgroup>
                <thead>
                  <tr>
                    <HeadCell>Entities</HeadCell>
                    <HeadCell $right>ID</HeadCell>
                    <HeadCell aria-label="Color"><Wheel /></HeadCell>
                    <HeadCell>Inclu</HeadCell>
                  </tr>
                </thead>
                <tbody>
                  <TreeRow>
                    <td colSpan={4}><NameCell><Toggle>+</Toggle><Icon name="open" size={11} /><RowLabel>Assembly Hierarchy</RowLabel></NameCell></td>
                  </TreeRow>
                  <TreeRow>
                    <td colSpan={4}><NameCell><Toggle>−</Toggle><Icon name="bFolderSlab" size={11} /><RowLabel>Components (127)</RowLabel></NameCell></td>
                  </TreeRow>
                  {components.map((c, i) => {
                    const on = c === "DE_BUSH";
                    return (
                      <TreeRow key={c} $on={on}>
                        <td>
                          <NameCell>
                            <Guide /><Branch />
                            <Icon name={on ? "tPlateSel" : "tPlate"} size={10} />
                            <Icon name={on ? "tMeshSel" : "tMesh"} size={10} />
                            <RowLabel>{c}</RowLabel>
                          </NameCell>
                        </td>
                        <IdCell>{i + 1}</IdCell>
                        <SwatchCell><Icon name="tSwatch" size={11} /></SwatchCell>
                        <td />
                      </TreeRow>
                    );
                  })}
                </tbody>
              </table>
            </TreeClip>
            <ScrollV>
              <Scroll to="up" />
              <ThumbV />
              <Scroll to="down" />
            </ScrollV>
          </TreeArea>
          <ScrollH>
            <Scroll to="left" />
            <ThumbH />
            <Scroll to="right" />
          </ScrollH>
          <Splitter><SplitArrow /></Splitter>
          <Properties>
            <table>
              <colgroup><col width="56" /><col /></colgroup>
              <thead><tr><HeadCell>Name</HeadCell><HeadCell>Value</HeadCell></tr></thead>
              <tbody>
                <PropRow><th>Name</th><td>DE_BUSH</td></PropRow>
                <PropRow><th>ID</th><td>5</td></PropRow>
                <PropRow><th>Color</th><td><Icon name="tSwatch" size={10} /></td></PropRow>
                <PropRow $dim><th>Include</th><td>[Master Model]</td></PropRow>
                <PropRow><th>Property</th><td>&lt;Unspecified&gt;</td></PropRow>
                <PropRow $dim><th>Material</th><td>&lt;Unspecified&gt;</td></PropRow>
              </tbody>
            </table>
          </Properties>
        </Side>
        <Work>
          <Stage>
            <Rail>
              <RailGrip />
              {rail.map((n) => <RailButton key={n} $on={railOn.includes(n)} aria-label={n}><Icon name={n} size={14} /></RailButton>)}
            </Rail>
            <Viewport>
              <Scene viewBox="258 71 735 384" role="img" aria-label="Meshed bush"><Model /><Triad /></Scene>
              <ModelInfo>Model Info: D:/Alternator Noise/Karthik/K1.hm*</ModelInfo>
            </Viewport>
          </Stage>
          <Toolbar>
            <Tools w={32} items={[":", "bMesh+"]} />
            <Tools w={197} items={[":", "bFolderBlocks", "bFolderSlab", "bFolderBeam", "bFolderBlock", "bFolderRed", "bFolderAxis+", "|", "bX", "bBlocks", "bMove", "bNum"]} />
            <Handle />
            <PickBox $w={64}><Icon name="modes" size={12} /><Pick aria-label="Shading"><option>Mixed</option></Pick><Caret /></PickBox>
            <Tools w={68} items={["bShellO+", "bShell+", "bCube", "|"]} />
            <PickBox $w={66}><Icon name="modes2" size={12} /><Pick aria-label="Color mode"><option>By Comp</option></Pick><Caret /></PickBox>
            <Tools w={157} items={["bWire+", "bCubeGrid+", "bLine+", "bTile+", "bSlab+", "bSquares", "bMonitor"]} />
            <Tools w={26} items={[":", "star"]} />
          </Toolbar>
          <Line />
          <Panel onSubmit={(e) => e.preventDefault()}>
            <Column>
              {["Tetra mesh", "Tetra remesh", "Volume tetra", "Tetramesh parameters", "Refinement box"].map((t, i) => (
                <Choice key={t}><Radio type="radio" name="mode" defaultChecked={i === 0} />{t}</Choice>
              ))}
            </Column>
            <Column>
              <span>Fixed trias/quads to tetra mesh</span>
              <Bar><Down /><PanelButton type="button" $w={129} $tone="active">comps</PanelButton><First /></Bar>
              <Bar><Down /><PanelButton type="button" $w={150}>Split Quads into Trias</PanelButton></Bar>
              <Spacer />
              <span>Float trias/quads to tetra mesh</span>
              <Bar><Down /><PanelButton type="button" $w={129} $tone="pick">comps</PanelButton><First /></Bar>
              <Bar><Spin /><PanelButton type="button" $w={150}>remesh</PanelButton></Bar>
            </Column>
            <Column>
              <Choice><Check type="checkbox" defaultChecked />fix comp boundaries</Choice>
              <Choice><Check type="checkbox" defaultChecked />update input shells</Choice>
              <Bar><Spin /><PanelButton type="button" $w={161}>mesh to current comp</PanelButton></Bar>
              <Spacer />
              <span>Anchor nodes:</span>
              <Bar><PanelButton type="button" $w={128} $tone="pick">nodes</PanelButton><First /></Bar>
            </Column>
            <Column>
              {["mesh", "reject", "mesh to file", "check 2D mesh"].map((t) => <PanelButton key={t} type="button" $w={80} $tone="go">{t}</PanelButton>)}
              <Quit><PanelButton type="button" $w={60} $tone="quit">return</PanelButton></Quit>
            </Column>
          </Panel>
          <Line />
          <Console><span>Main console display active (Tcl8.5.9 / Tk8.5.9)</span><Grip /></Console>
        </Work>
      </Main>
      <StatusBar>
        <StatusText>0 nodes and 2340 elems created.</StatusText>
        <StatusCell $w={60} />
        <StatusCell $w={61}>Model</StatusCell>
        <StatusCell $w={69}>◘ DE_BUSH</StatusCell>
        <StatusCell $w={69} />
      </StatusBar>
    </Page>
  );
}
